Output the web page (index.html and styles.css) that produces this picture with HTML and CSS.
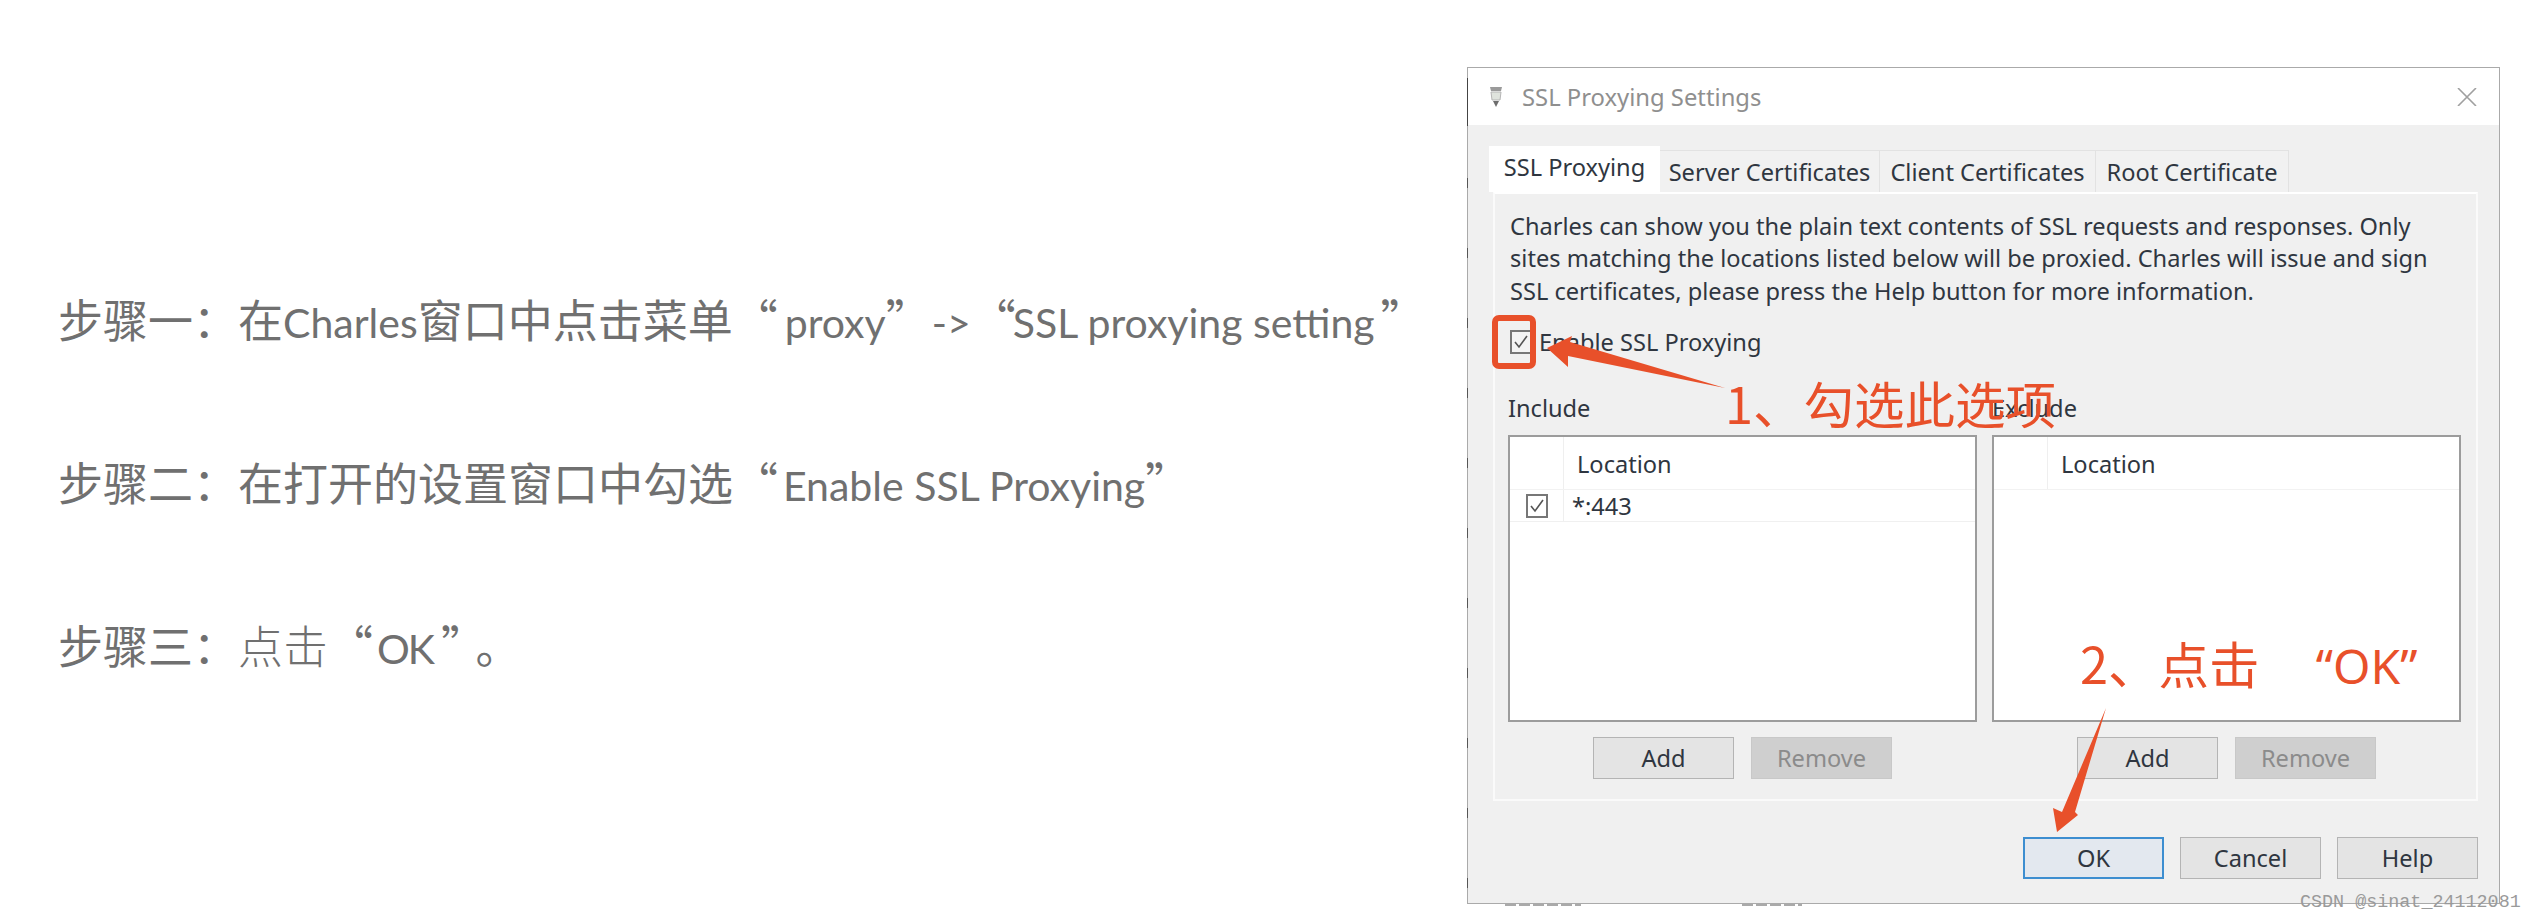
FILE: index.html
```html
<!doctype html>
<html lang="zh-CN">
	<head>
		<meta charset="utf-8">
		<title>SSL Proxying Settings</title>
		<link rel="stylesheet" href="styles.css">
	</head>
	<body>
		<div class="steps">
			<p class="step">步骤一：在<span class="latin">Charles</span>窗口中点击菜单“<span class="latin proxy">proxy</span>”<span class="latin arrow-text">-&gt;</span>“<span class="latin setting">SSL proxying setting</span>”</p>
			<p class="step">步骤二：在打开的设置窗口中勾选“<span class="latin enable-text">Enable SSL Proxying</span>”</p>
			<p class="step">步骤三：<span class="thin">点击</span>“<span class="latin ok">OK</span>”<span class="period">。</span></p>
		</div>

		<div class="dialog">
			<div class="title-bar">
				<svg class="app-icon" width="14" height="22" viewBox="0 0 14 22">
					<path d="M1 1h12l-1 4H2z" fill="#9a9a9a"/>
					<path d="M2 6h10l-1 8H3z" fill="#dfe3dd" stroke="#b5b5b5"/>
					<path d="M4 15h6l-3 6z" fill="#6d6d6d"/>
				</svg>
				<span class="title">SSL Proxying Settings</span>
				<svg class="close" width="20" height="18" viewBox="0 0 20 18">
					<path d="M1 0l18 18M19 0L1 18" stroke="#a0a0a0" stroke-width="1.6" fill="none"/>
				</svg>
			</div>

			<div class="dialog-body">
				<div class="tabs">
					<div class="tab active">SSL Proxying</div>
					<div class="tab tab-server">Server Certificates</div>
					<div class="tab tab-client">Client Certificates</div>
					<div class="tab tab-root">Root Certificate</div>
				</div>

				<div class="panel">
					<p class="intro">Charles can show you the plain text contents of SSL requests and responses. Only<br>sites matching the locations listed below will be proxied. Charles will issue and sign<br>SSL certificates, please press the Help button for more information.</p>

					<label class="enable">
						<span class="check"><svg width="16" height="14" viewBox="0 0 16 14"><path d="M2 7l4 5 8-11" stroke="#555" stroke-width="1.6" fill="none"/></svg></span>
						Enable SSL Proxying
					</label>

					<div class="lists">
						<div class="list">
							<div class="list-label">Include</div>
							<div class="table">
								<div class="table-head">
									<div class="col-check"></div>
									<div class="col-location">Location</div>
								</div>
								<div class="table-row">
									<div class="col-check"><span class="check small"><svg width="16" height="14" viewBox="0 0 16 14"><path d="M2 7l4 5 8-11" stroke="#555" stroke-width="1.6" fill="none"/></svg></span></div>
									<div class="cell">*:443</div>
								</div>
							</div>
							<div class="list-buttons">
								<button class="btn">Add</button>
								<button class="btn disabled">Remove</button>
							</div>
						</div>
						<div class="list">
							<div class="list-label">Exclude</div>
							<div class="table">
								<div class="table-head">
									<div class="col-check"></div>
									<div class="col-location">Location</div>
								</div>
							</div>
							<div class="list-buttons">
								<button class="btn">Add</button>
								<button class="btn disabled">Remove</button>
							</div>
						</div>
					</div>
				</div>

				<div class="footer">
					<button class="btn primary">OK</button>
					<button class="btn">Cancel</button>
					<button class="btn">Help</button>
				</div>
			</div>
		</div>

		<div class="peek peek-1"></div>
		<div class="peek peek-2"></div>

		<div class="note note-1">1、勾选此选项</div>
		<div class="note note-2">2、点击 <span class="note-ok">“OK”</span></div>
		<div class="check-mark"></div>
		<svg class="arrows" width="2536" height="922" viewBox="0 0 2536 922">
			<path d="M1725 388L1570 342L1572 336L1547 348L1568 367L1568 356Z" fill="#e8502a"/>
			<path d="M2106 708L2075 812L2078 815L2057 832L2053 808L2062 812Z" fill="#e8502a"/>
		</svg>
		<div class="watermark">CSDN @sinat_24112081</div>
	</body>
</html>
```

FILE: styles.css
```css
html {
	font-family: "Noto Sans", "Noto Sans CJK SC", sans-serif;
}

body {
	margin: 0;
	width: 2536px;
	height: 922px;
	background: #fff;
	display: flex;
	justify-content: space-between;
	align-items: flex-start;
	padding-right: 36px;
	box-sizing: border-box;
	overflow: hidden;
}

/* left column */

.steps {
	padding: 291px 0 0 58px;
	display: flex;
	flex-direction: column;
	gap: 107px;
}

.step {
	margin: 0;
	height: 56px;
	line-height: 56px;
	font-family: "Noto Sans CJK SC", sans-serif;
	font-size: 45px;
	color: #707070;
	white-space: nowrap;
}

.latin {
	font-family: Lato, sans-serif;
	font-size: 41px;
}

.proxy {
	margin-left: 7px;
}

.arrow-text {
	margin-left: 1px;
}

.setting {
	margin: 0 6px 0 -3px;
}

.enable-text {
	margin-left: 5px;
}

.ok {
	letter-spacing: -2px;
	margin: 0 8px 0 4px;
}

.period {
	margin-left: 12px;
}

.thin {
	font-weight: 300;
}

/* dialog */

.dialog {
	margin-top: 67px;
	width: 1033px;
	height: 837px;
	box-sizing: border-box;
	border: 1px solid #aaa;
	background: #f0f0f0;
	display: flex;
	flex-direction: column;
	font-size: 23.6px;
	color: #2f3640;
	position: relative;
}

/* the rough dark edge on the left of the captured window */
.dialog::before {
	content: "";
	position: absolute;
	left: -1px;
	top: 10px;
	bottom: 0;
	width: 1px;
	background: linear-gradient(#444 0 48px, transparent 48px), repeating-linear-gradient(transparent 0 30px, #555 30px 40px, transparent 40px 70px);
}

.title-bar {
	height: 57px;
	background: #fff;
	display: flex;
	align-items: center;
	padding: 0 22px 0 21px;
	flex: none;
}

.app-icon {
	margin-right: 19px;
}

.title {
	flex: 1;
	color: #8f8f8f;
	font-size: 23.8px;
}

.dialog-body {
	flex: 1;
	padding: 21px 21px 0 21px;
	display: flex;
	flex-direction: column;
}

.tabs {
	display: flex;
	align-items: flex-end;
	height: 46px;
}

.tab {
	height: 42px;
	line-height: 42px;
	box-sizing: border-box;
	border: 1px solid #e2e2e2;
	border-left: 0;
	border-bottom: 0;
	background: #f1f1f1;
	text-align: center;
}

.tab.active {
	height: 46px;
	line-height: 42px;
	width: 171px;
	background: #fff;
	border: 0;
}

.tab-server {
	width: 220px;
}

.tab-client {
	width: 216px;
}

.tab-root {
	width: 193px;
}

.panel {
	margin-left: 4px;
	height: 609px;
	box-sizing: border-box;
	border: 2px solid #fafafa;
	border-top-color: #fff;
	padding: 0 15px;
}

.intro {
	margin: 0;
	padding-top: 16px;
	line-height: 32.4px;
	white-space: nowrap;
}

.enable {
	display: flex;
	align-items: center;
	margin: 22px 0 0 0;
	height: 26px;
	gap: 7px;
}

.check {
	width: 22px;
	height: 24px;
	box-sizing: border-box;
	border: 2px solid #777;
	background: #f4f4f4;
	display: flex;
	align-items: center;
	justify-content: center;
	flex: none;
}

.check.small {
	background: #fff;
}

.lists {
	display: flex;
	gap: 15px;
	margin: 36px 0 0 -2px;
}

.list {
	width: 469px;
}

.list-label {
	height: 34px;
	line-height: 34px;
	margin-bottom: 10px;
}

.table {
	height: 287px;
	box-sizing: border-box;
	border: 2px solid #9c9c9c;
	background: #fff;
}

.table-head {
	display: flex;
	height: 52px;
	border-bottom: 1px solid #f2f2f2;
}

.table-row {
	display: flex;
	height: 31px;
	border-bottom: 1px solid #f0f0f0;
}

.col-check {
	width: 53px;
	flex: none;
	border-right: 1px solid #efefef;
	display: flex;
	align-items: center;
	justify-content: center;
}

.col-location {
	padding-left: 13px;
	line-height: 54px;
}

.cell {
	padding-left: 8px;
	line-height: 32px;
}

.list-buttons {
	display: flex;
	justify-content: center;
	gap: 17px;
	margin-top: 15px;
}

.btn {
	width: 141px;
	height: 42px;
	box-sizing: border-box;
	padding: 0;
	border: 1px solid #b4b4b4;
	background: #e4e4e4;
	font-family: "Noto Sans", sans-serif;
	font-size: 23.6px;
	color: #2f3640;
}

.btn.disabled {
	background: #cfcfcf;
	border-color: #c8c8c8;
	color: #8b8b8b;
}

.btn.primary {
	border: 2px solid #3d8ed0;
	background: #e3e8ef;
}

.footer {
	display: flex;
	justify-content: flex-end;
	gap: 16px;
	margin-top: 36px;
}

/* tops of the clipped row showing below the dialog */

.peek {
	position: absolute;
	top: 904px;
	height: 2px;
	background: repeating-linear-gradient(90deg, #aaa 0 11px, transparent 11px 14px);
}

.peek-1 {
	left: 1505px;
	width: 76px;
}

.peek-2 {
	left: 1742px;
	width: 60px;
}

/* red annotations over the dialog */

.note {
	position: absolute;
	font-family: "Noto Sans CJK SC", sans-serif;
	font-size: 50.5px;
	line-height: 60px;
	color: #e8502a;
	white-space: nowrap;
}

.note-1 {
	left: 1725px;
	top: 372px;
}

.note-2 {
	left: 2080px;
	top: 632px;
}

.note-ok {
	font-family: "Noto Sans", sans-serif;
	font-size: 48px;
	margin-left: 45px;
}

.check-mark {
	position: absolute;
	left: 1492px;
	top: 315px;
	width: 44px;
	height: 54px;
	box-sizing: border-box;
	border: 6px solid #e8502a;
	border-radius: 7px;
}

.arrows {
	position: absolute;
	left: 0;
	top: 0;
	pointer-events: none;
}

.watermark {
	position: absolute;
	left: 2300px;
	top: 886px;
	font-family: "Liberation Mono", monospace;
	font-size: 18.4px;
	line-height: 34px;
	color: #9a9a9a;
	white-space: nowrap;
}
```
